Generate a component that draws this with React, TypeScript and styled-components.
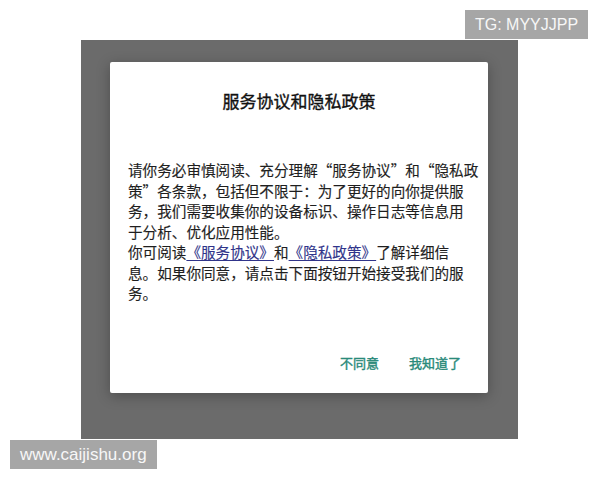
import React from "react";
import styled, { createGlobalStyle } from "styled-components";

const Global = createGlobalStyle`
  html, body { margin: 0; padding: 0; background: #ffffff; }
  body { font-family: "Noto Sans CJK SC", "Noto Sans", sans-serif; }
`;

const Page = styled.div`
  position: relative;
  width: 600px;
  height: 480px;
  overflow: hidden;
  padding: 40px 0 0 81px;
  box-sizing: border-box;
`;

const Backdrop = styled.div`
  width: 437px;
  height: 399px;
  background: #6b6b6b;
  padding: 22px 0 0 29px;
  box-sizing: border-box;
`;

const Dialog = styled.div`
  width: 378px;
  height: 331px;
  background: #ffffff;
  border-radius: 2px;
  box-shadow: 0 3px 14px rgba(0, 0, 0, 0.28);
  box-sizing: border-box;
  padding: 27px 0 20px 18px;
  display: flex;
  flex-direction: column;
`;

const Title = styled.h2`
  margin: 0;
  padding-right: 18px;
  font-size: 17px;
  line-height: 24px;
  font-weight: 400;
  -webkit-text-stroke: 0.35px #111111;
  color: #111111;
  text-align: center;
`;

const Body = styled.div`
  margin-top: 47px;
  font-size: 14.6px;
  line-height: 20.5px;
  color: #1e1e1e;
  -webkit-text-stroke: 0.15px currentColor;
`;

const Line = styled.div`
  white-space: nowrap;
`;

const Link = styled.a`
  color: #30348a;
  text-decoration: underline;
  text-underline-offset: 2px;
`;

const Actions = styled.div`
  margin-top: auto;
  display: flex;
  justify-content: flex-end;
  gap: 30px;
  padding-right: 27px;
`;

const ActionButton = styled.button`
  border: none;
  background: none;
  padding: 0;
  font-family: "Noto Sans CJK SC", sans-serif;
  font-size: 13px;
  line-height: 20px;
  font-weight: 400;
  -webkit-text-stroke: 0.4px #2a8a7a;
  color: #2a8a7a;
`;

const Watermark = styled.div<{ $top: number; $left: number; $size: number }>`
  position: absolute;
  top: ${(p) => p.$top}px;
  left: ${(p) => p.$left}px;
  height: 29px;
  padding: 0 10px;
  background: #a6a6a6;
  color: #f7f7f7;
  font-family: "Liberation Sans", Arial, sans-serif;
  font-size: ${(p) => p.$size}px;
  line-height: 29px;
  white-space: nowrap;
`;

export default function App() {
  return (
    <>
      <Global />
      <Page>
        <Backdrop>
          <Dialog>
            <Title>服务协议和隐私政策</Title>
            <Body>
              <Line>请你务必审慎阅读、充分理解“服务协议”和“隐私政</Line>
              <Line>策”各条款，包括但不限于：为了更好的向你提供服</Line>
              <Line>务，我们需要收集你的设备标识、操作日志等信息用</Line>
              <Line>于分析、优化应用性能。</Line>
              <Line>
                你可阅读<Link>《服务协议》</Link>和<Link>《隐私政策》</Link>了解详细信
              </Line>
              <Line>息。如果你同意，请点击下面按钮开始接受我们的服</Line>
              <Line>务。</Line>
            </Body>
            <Actions>
              <ActionButton>不同意</ActionButton>
              <ActionButton>我知道了</ActionButton>
            </Actions>
          </Dialog>
        </Backdrop>
        <Watermark $top={10} $left={465} $size={16}>TG: MYYJJPP</Watermark>
        <Watermark $top={440} $left={10} $size={17}>www.caijishu.org</Watermark>
      </Page>
    </>
  );
}
